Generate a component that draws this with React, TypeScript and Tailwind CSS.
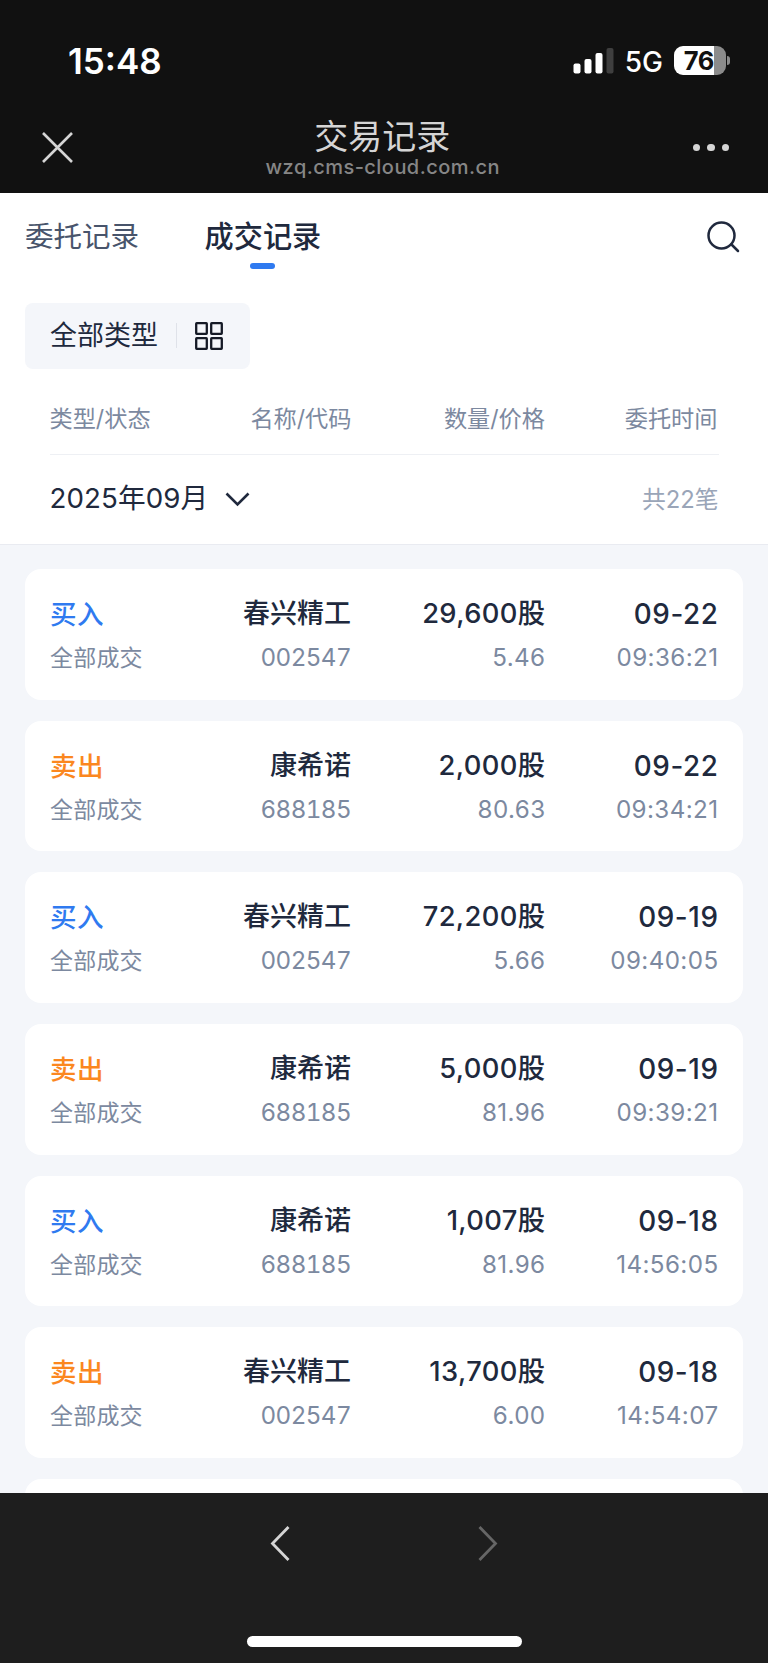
import React from 'react';

interface Deal {
  id: number;
  side: 'buy' | 'sell';
  name: string;
  code: string;
  amount: string;
  price: string;
  date: string;
  time: string;
}

const deals: Deal[] = [
  { id: 1, side: 'buy', name: '春兴精工', code: '002547', amount: '29,600股', price: '5.46', date: '09-22', time: '09:36:21' },
  { id: 2, side: 'sell', name: '康希诺', code: '688185', amount: '2,000股', price: '80.63', date: '09-22', time: '09:34:21' },
  { id: 3, side: 'buy', name: '春兴精工', code: '002547', amount: '72,200股', price: '5.66', date: '09-19', time: '09:40:05' },
  { id: 4, side: 'sell', name: '康希诺', code: '688185', amount: '5,000股', price: '81.96', date: '09-19', time: '09:39:21' },
  { id: 5, side: 'buy', name: '康希诺', code: '688185', amount: '1,007股', price: '81.96', date: '09-18', time: '14:56:05' },
  { id: 6, side: 'sell', name: '春兴精工', code: '002547', amount: '13,700股', price: '6.00', date: '09-18', time: '14:54:07' },
];

const StatusBar: React.FC = () => (
  <div className="flex h-[118px] items-start justify-between pl-[68px] pr-[38px] pt-[41px] text-white">
    <span className="text-[35px] font-semibold leading-[41px]">15:48</span>
    <div className="flex h-[40px] items-center">
      <svg width="41" height="26" viewBox="0 0 41 26" className="mt-[-1px]" fill="#fff">
        <rect x="0.5" y="15.5" width="7" height="10" rx="2" />
        <rect x="11.5" y="11" width="7" height="14.5" rx="2" />
        <rect x="22.5" y="5" width="7" height="20.5" rx="2" />
        <rect x="33.5" y="0" width="7" height="25.5" rx="2" fill="#3f3f3f" />
      </svg>
      <span className="ml-[11px] pt-[2px] text-[28px] font-medium leading-[40px]">5G</span>
      <div className="mt-[-1px] ml-[11px] flex items-center">
        <div className="flex h-[28.5px] w-[51.5px] items-center justify-center rounded-[9px] bg-linear-to-r from-white from-76% to-[#8b8b8b] to-76% pr-[2px] text-[25.5px] font-bold leading-none tracking-[-0.5px] text-[#111]">
          76
        </div>
        <div className="ml-[1.5px] h-[9px] w-[3px] rounded-r-full bg-[#8b8b8b]"></div>
      </div>
    </div>
  </div>
);

const TitleBar: React.FC = () => (
  <div className="flex h-[74.5px] items-start justify-between pl-[42px] pr-[39px]">
    <svg width="31" height="31" viewBox="0 0 31 31" className="mt-[14px]" stroke="#d5d5d5" strokeWidth="2.6">
      <path d="M1 1l29 29M30 1L1 30" />
    </svg>
    <div className="flex flex-col items-center">
      <h1 className="mr-[1px] text-[34px] leading-[37px] text-[#d5d5d5]">交易记录</h1>
      <p className="text-[20px] font-medium leading-[24px] tracking-[0.45px] text-[#868686]">wzq.cms-cloud.com.cn</p>
    </div>
    <div className="mt-[25.5px] flex gap-[7px]">
      <i className="size-[7.5px] rounded-full bg-[#d5d5d5]"></i>
      <i className="size-[7.5px] rounded-full bg-[#d5d5d5]"></i>
      <i className="size-[7.5px] rounded-full bg-[#d5d5d5]"></i>
    </div>
  </div>
);

const DealCard: React.FC<{ deal: Deal }> = ({ deal }) => (
  <li className="grid h-[130.7px] shrink-0 grid-cols-[149.5px_151.5px_194.5px_173px] grid-rows-[38px_38px] gap-y-[6px] rounded-[16px] bg-white px-[25px] pt-[26px] text-right text-[24.2px] leading-[38px] tracking-[0.4px] text-[#7c89a0]">
    <span className={`text-left text-[26.5px] font-medium ${deal.side === 'buy' ? 'text-[#2f7af0]' : 'text-[#fb871f]'}`}>
      {deal.side === 'buy' ? '买入' : '卖出'}
    </span>
    <span className="text-[27px] font-medium tracking-normal text-[#20293d]">{deal.name}</span>
    <span className="text-[27.3px] font-medium tracking-[0.4px] text-[#20293d]">{deal.amount}</span>
    <span className="text-[27.8px] font-medium tracking-[0.6px] text-[#20293d]">{deal.date}</span>
    <span className="text-left text-[23px] tracking-[0.2px]">全部成交</span>
    <span className="tabular-nums tracking-[-0.6px]">{deal.code}</span>
    <span>{deal.price}</span>
    <span>{deal.time}</span>
  </li>
);

const App: React.FC = () => {
  return (
    <div className="flex h-[1663px] w-[768px] flex-col overflow-hidden bg-[#f4f6fa] font-['Inter','Noto_Sans_CJK_SC',sans-serif]">
      <header className="h-[192.5px] shrink-0 bg-[#111]">
        <StatusBar />
        <TitleBar />
      </header>

      <section className="h-[352.5px] shrink-0 border-b border-[#e9ebf1] bg-white">
        <div className="flex h-[110.5px] items-start pl-[25px] pr-[28.5px] pt-[24px]">
          <button className="text-[28.5px] leading-[40px] text-[#48546b]">委托记录</button>
          <button className="ml-[65.5px] flex flex-col items-center text-[29.2px] font-medium leading-[40px] text-[#20293d]">
            成交记录
            <i className="mt-[6px] h-[6px] w-[25px] rounded-full bg-[#2f7af0]"></i>
          </button>
          <svg width="34" height="34" viewBox="0 0 34 34" className="ml-auto mt-[3px]" fill="none" stroke="#20293d" strokeWidth="2.5" strokeLinecap="round">
            <circle cx="15.5" cy="15.5" r="13" />
            <path d="M25.5 24.5l6.5 6.5" />
          </svg>
        </div>

        <button className="ml-[25px] flex h-[65.5px] w-[225px] items-center rounded-[8px] bg-[#f4f6fa] pl-[25px] text-[27px] text-[#20293d]">
          <span className="pt-px">全部类型</span>
          <i className="ml-[17.5px] h-[25px] w-px bg-[#dfe2e9]"></i>
          <svg width="28" height="28" viewBox="0 0 28 28" className="ml-[18.5px]" fill="none" stroke="#151a26" strokeWidth="2.3">
            <rect x="1.2" y="1.2" width="10.6" height="10.6" rx="0.5" />
            <rect x="16.2" y="1.2" width="10.6" height="10.6" rx="0.5" />
            <rect x="1.2" y="16.2" width="10.6" height="10.6" rx="0.5" />
            <rect x="16.2" y="16.2" width="10.6" height="10.6" rx="0.5" />
          </svg>
        </button>

        <div className="mx-[49.5px]">
          <div className="grid h-[86px] grid-cols-[149.5px_152.5px_193.5px_172.5px] border-b border-[#eef0f4] pt-[30px] text-right text-[23.2px] leading-[40px] text-[#7c89a0]">
            <span className="text-left">类型/状态</span>
            <span>名称/代码</span>
            <span>数量/价格</span>
            <span>委托时间</span>
          </div>
          <div className="flex h-[89px] items-center justify-between">
            <button className="flex items-center text-[27.7px] tracking-[0.1px] text-[#20293d]">
              <span>2025年09月</span>
              <svg width="25" height="15" viewBox="0 0 25 15" className="mt-px ml-[16.5px]" fill="none" stroke="#20293d" strokeWidth="2.6">
                <path d="M1.5 1.5l11 11 11-11" />
              </svg>
            </button>
            <span className="pt-px text-[23.8px] text-[#9aa5b8]">共22笔</span>
          </div>
        </div>
      </section>

      <ul className="flex h-[947.7px] shrink-0 flex-col gap-[20.9px] overflow-hidden px-[25px] pt-[24.2px]">
        {deals.map((deal) => (
          <DealCard key={deal.id} deal={deal} />
        ))}
        <li className="h-[130.7px] shrink-0 rounded-[16px] bg-white"></li>
      </ul>

      <footer className="flex flex-1 flex-col items-center bg-[#1e1e1e]">
        <div className="mt-[33px] flex gap-[188px]">
          <svg width="20" height="35" viewBox="0 0 20 35" fill="none" stroke="#d5d5d5" strokeWidth="2.8">
            <path d="M18.5 1L2.5 17.5l16 16.5" />
          </svg>
          <svg width="20" height="35" viewBox="0 0 20 35" fill="none" stroke="#666" strokeWidth="2.8">
            <path d="M1.5 1l16 16.5L1.5 34" />
          </svg>
        </div>
        <div className="mt-[75.5px] h-[10.5px] w-[275px] rounded-full bg-white"></div>
      </footer>
    </div>
  );
};

export default App;
